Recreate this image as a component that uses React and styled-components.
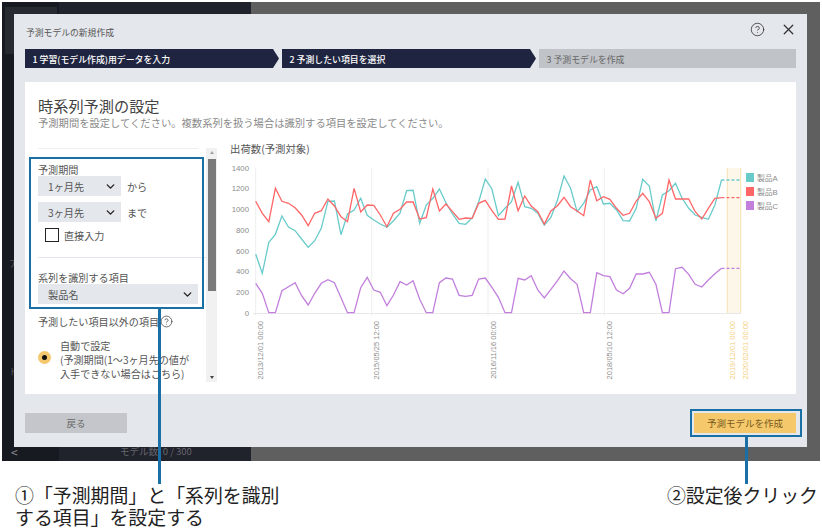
import styled, { createGlobalStyle } from "styled-components";
import { ChevronDown, CircleHelp, X } from "lucide-react";

// traces read off the screenshot, as y in 3x pixels of the chart crop (y = 140 + v / 3)
const TEAL = [
  343, 400, 307, 283, 228, 261, 272, 297, 322, 302, 265, 184, 183, 284, 222, 210, 175, 226, 240, 252, 262, 242, 220, 152,
  151, 250, 195, 175, 147, 188, 222, 250, 253, 234, 185, 117, 147, 227, 205, 185, 127, 200, 205, 220, 255, 232, 180, 108,
  145, 215, 190, 150, 140, 192, 190, 210, 242, 243, 205, 118, 138, 243, 165, 152, 130, 175, 205, 225, 232, 238, 195, 120,
];
const RED = [
  184, 220, 245, 145, 184, 190, 203, 225, 257, 220, 212, 177, 198, 230, 245, 145, 216, 195, 196, 225, 260, 220, 208, 186,
  186, 237, 233, 147, 213, 192, 215, 238, 234, 235, 190, 181, 212, 238, 237, 138, 212, 168, 198, 215, 252, 213, 197, 172,
  200, 213, 227, 120, 182, 170, 178, 205, 226, 220, 183, 160, 185, 235, 220, 120, 177, 177, 177, 215, 237, 205, 175, 173,
];
const PURPLE = [
  430, 460, 518, 518, 452, 440, 428, 467, 495, 460, 430, 419, 428, 473, 518, 518, 443, 412, 450, 457, 497, 465, 425, 435,
  422, 478, 518, 518, 428, 414, 417, 466, 469, 466, 417, 414, 442, 472, 518, 518, 415, 420, 407, 450, 474, 448, 422, 393,
  416, 433, 518, 518, 398, 407, 410, 450, 461, 445, 402, 402, 397, 433, 518, 518, 386, 382, 403, 433, 441, 420, 401, 385,
];

const SERIES = [
  { name: "製品A", color: "#68cbca", data: TEAL },
  { name: "製品B", color: "#ff6668", data: RED },
  { name: "製品C", color: "#c27fdc", data: PURPLE },
];

const X0 = 255.7;
const STEP = 6.56;
const BAND_LEFT = 727.3;
const BAND_RIGHT = 740.7;
const Y_TICKS = [1400, 1200, 1000, 800, 600, 400, 200, 0];
const DATES = [
  { x: 260, label: "2013/12/01 00:00", color: "#8c8c8c" },
  { x: 376.7, label: "2015/05/25 12:00", color: "#8c8c8c" },
  { x: 493, label: "2016/11/16 00:00", color: "#8c8c8c" },
  { x: 609.3, label: "2018/05/10 12:00", color: "#8c8c8c" },
  { x: 732.5, label: "2019/12/01 00:00", color: "#f6cf80" },
  { x: 745, label: "2020/02/01 00:00", color: "#f6cf80" },
];

const toPoints = (data) => data.map((v, i) => `${(X0 + STEP * i).toFixed(1)},${(140 + v / 3).toFixed(1)}`).join(" ");
const lastY = (data) => 140 + data[data.length - 1] / 3;
const lastX = X0 + STEP * 71;

function ForecastChart() {
  return (
    <ChartSvg viewBox="225 156 565 229" width="565" height="229">
      <rect x={BAND_LEFT} y="168" width={BAND_RIGHT - BAND_LEFT} height="145" fill="#fdf7ea" />
      <line x1={BAND_LEFT} y1="168" x2={BAND_LEFT} y2="313" stroke="#f8e2b4" />
      <line x1={BAND_RIGHT} y1="168" x2={BAND_RIGHT} y2="313" stroke="#f8e2b4" />
      {[255.7, 371.7, 488, 604.3].map((x) => (
        <line key={x} x1={x} y1="168" x2={x} y2="316" stroke="#eeeeee" />
      ))}
      <line x1="253" y1="313.5" x2="741" y2="313.5" stroke="#e8e8e8" />
      {Y_TICKS.map((tick) => (
        <AxisText key={tick} x="249" y={313 - tick * 0.1039 + 3} textAnchor="end" fill="#8c8c8c">
          {tick}
        </AxisText>
      ))}
      {DATES.map((d) => (
        <DateText key={d.label} transform={`translate(${d.x + 2.7} 321) rotate(-90)`} textAnchor="end" fill={d.color}>
          {d.label}
        </DateText>
      ))}
      {SERIES.map((s) => (
        <g key={s.name}>
          <polyline points={toPoints(s.data)} fill="none" stroke={s.color} strokeWidth="1.3" />
          <line
            x1={lastX}
            y1={lastY(s.data)}
            x2={BAND_RIGHT}
            y2={lastY(s.data)}
            stroke={s.color}
            strokeWidth="1.3"
            strokeDasharray="3 2"
          />
        </g>
      ))}
      {SERIES.map((s, i) => (
        <g key={s.name}>
          <rect x="746" y={173 + i * 14} width="8" height="9" fill={s.color} />
          <AxisText x="757" y={181 + i * 14} fill="#8c8c8c">
            {s.name}
          </AxisText>
        </g>
      ))}
    </ChartSvg>
  );
}

export default function App() {
  return (
    <Page>
      <GlobalStyle />
      <Screen>
        <SideRail>
          <RailTile />
          <RailText $top={255}>ア</RailText>
          <RailText $top={363}>ド</RailText>
          <RailBack>&lt;</RailBack>
        </SideRail>
        <ListColumn>
          <ModelCount>モデル数: 0 / 300</ModelCount>
        </ListColumn>
        <Modal>
          <ModalHeader>
            <ModalTitle>予測モデルの新規作成</ModalTitle>
            <HeaderIcons>
              <CircleHelp size={15} strokeWidth={1.3} />
              <X size={17} strokeWidth={1.8} />
            </HeaderIcons>
          </ModalHeader>
          <Stepper>
            <Step $width={254} $arrow>
              1 学習(モデル作成)用データを入力
            </Step>
            <Step $width={254} $arrow>
              2 予測したい項目を選択
            </Step>
            <Step $width={257} $off>
              3 予測モデルを作成
            </Step>
          </Stepper>
          <Content>
            <Heading>時系列予測の設定</Heading>
            <SubHeading>予測期間を設定してください。複数系列を扱う場合は識別する項目を設定してください。</SubHeading>
            <Body>
              <SettingsPane>
                <TopRule />
                <FieldLabel $first>予測期間</FieldLabel>
                <SelectRow>
                  <FakeSelect $width={83}>
                    1ヶ月先
                    <ChevronDown size={13} strokeWidth={2.6} />
                  </FakeSelect>
                  から
                </SelectRow>
                <SelectRow $second>
                  <FakeSelect $width={83}>
                    3ヶ月先
                    <ChevronDown size={13} strokeWidth={2.6} />
                  </FakeSelect>
                  まで
                </SelectRow>
                <CheckRow>
                  <CheckBox />
                  直接入力
                </CheckRow>
                <Divider />
                <FieldLabel>系列を識別する項目</FieldLabel>
                <FakeSelect $width={160}>
                  製品名
                  <ChevronDown size={13} strokeWidth={2.6} />
                </FakeSelect>
                <HelpLabel>
                  予測したい項目以外の項目
                  <CircleHelp size={13} strokeWidth={1.3} />
                </HelpLabel>
                <RadioRow>
                  <Radio />
                  <RadioText>
                    自動で設定
                    <br />
                    (予測期間(1〜3ヶ月先の値が
                    <br />
                    入手できない場合はこちら)
                  </RadioText>
                </RadioRow>
              </SettingsPane>
              <ScrollTrack>
                <ScrollArrow $up />
                <ScrollThumb />
                <ScrollArrow />
              </ScrollTrack>
              <ChartColumn>
                <ChartTitle>出荷数(予測対象)</ChartTitle>
                <ForecastChart />
              </ChartColumn>
            </Body>
          </Content>
          <ModalFooter>
            <BackButton>戻る</BackButton>
            <CreateButton>予測モデルを作成</CreateButton>
          </ModalFooter>
        </Modal>
      </Screen>
      <Captions>
        <Caption>
          ①「予測期間」と「系列を識別
          <br />
          する項目」を設定する
        </Caption>
        <Caption>②設定後クリック</Caption>
      </Captions>
      <HighlightBox $left={29} $top={157} $width={175} $height={152} />
      <HighlightBox $left={690} $top={409} $width={112} $height={28} />
      <Leader $left={158} $top={309} $height={175} />
      <Leader $left={745} $top={437} $height={47} />
    </Page>
  );
}

const GlobalStyle = createGlobalStyle`
  html, body {
    margin: 0;
    padding: 0;
    background: #ffffff;
  }
  * {
    box-sizing: border-box;
  }
`;

const Page = styled.div`
  position: relative;
  width: 822px;
  height: 528px;
  overflow: hidden;
  font-family: "Noto Sans CJK JP", "Noto Sans", sans-serif;
  color: #555;
`;

const Screen = styled.div`
  position: relative;
  display: flex;
  width: 818px;
  height: 459px;
  margin: 2px 2px 0;
  background: #5f5f60;
`;

const SideRail = styled.div`
  position: relative;
  width: 57px;
  background: #181a21;
`;

const RailTile = styled.div`
  width: 52px;
  height: 47px;
  margin: 5px 0 0 3px;
  background: #282a31;
`;

const RailText = styled.span`
  position: absolute;
  left: 7px;
  top: ${(props) => props.$top}px;
  font-size: 9px;
  color: #55565c;
`;

const RailBack = styled.span`
  position: absolute;
  left: 9px;
  top: 441px;
  font-size: 12px;
  color: #8a8b90;
`;

const ListColumn = styled.div`
  display: flex;
  align-items: flex-end;
  width: 192px;
  padding: 0 0 3px 61px;
  background: #20222c;
`;

const ModelCount = styled.div`
  font-size: 9.5px;
  line-height: 14px;
  color: #66676d;
`;

const Modal = styled.div`
  position: absolute;
  left: 12px;
  top: 12px;
  display: flex;
  flex-direction: column;
  width: 793px;
  height: 433px;
  padding: 0 11px;
  background: #e4e7ec;
`;

const ModalHeader = styled.div`
  display: flex;
  justify-content: space-between;
  align-items: center;
  height: 35px;
  padding-bottom: 4px;
`;

const ModalTitle = styled.div`
  margin: 5px 0 0 1px;
  font-size: 8.8px;
  color: #555;
`;

const HeaderIcons = styled.div`
  display: flex;
  align-items: center;
  gap: 15px;
  margin-right: -1px;
  color: #333;
`;

const Stepper = styled.div`
  display: flex;
  gap: 3px;
  height: 19px;
`;

const Step = styled.div`
  display: flex;
  flex-shrink: 0;
  align-items: center;
  width: ${(props) => props.$width}px;
  padding: 1px 0 0 7.5px;
  font-size: 8.9px;
  font-weight: ${(props) => (props.$off ? 400 : 500)};
  color: ${(props) => (props.$off ? "#666" : "#fff")};
  background: ${(props) => (props.$off ? "#c0c3c8" : "#1f2540")};
  clip-path: ${(props) =>
    props.$arrow ? "polygon(0 0, calc(100% - 6px) 0, 100% 50%, calc(100% - 6px) 100%, 0 100%)" : "none"};
`;

const Content = styled.div`
  height: 312px;
  margin-top: 14px;
  padding: 14px 0 0 13px;
  background: #fff;
`;

const Heading = styled.h1`
  margin: 0 0 1px;
  font-size: 15.2px;
  font-weight: 400;
  line-height: 18px;
  color: #444;
`;

const SubHeading = styled.p`
  margin: 0;
  font-size: 10.3px;
  line-height: 16px;
  color: #8a8a8a;
`;

const Body = styled.div`
  display: flex;
  height: 243px;
  margin-top: 11px;
`;

const SettingsPane = styled.div`
  width: 168px;
  height: 234px;
  margin-top: 6px;
  overflow: hidden;
  font-size: 10.1px;
`;

const TopRule = styled.div`
  width: 160px;
  height: 1px;
  background: #eeeeee;
`;

const FieldLabel = styled.div`
  margin-top: ${(props) => (props.$first ? 14 : 13)}px;
  line-height: 13px;
`;

const SelectRow = styled.div`
  display: flex;
  align-items: center;
  gap: 6px;
  margin-top: ${(props) => (props.$second ? 6 : 0)}px;
`;

const FakeSelect = styled.div`
  display: flex;
  justify-content: space-between;
  align-items: center;
  width: ${(props) => props.$width}px;
  height: 20px;
  padding: 0 4px 0 10px;
  font-size: 10.2px;
  background: #e4e7ec;
  svg {
    color: #222;
  }
`;

const CheckRow = styled.div`
  display: flex;
  align-items: center;
  gap: 5px;
  height: 14px;
  margin-top: 6px;
  padding-left: 7px;
`;

const CheckBox = styled.div`
  width: 14px;
  height: 14px;
  border: 1.5px solid #222;
  background: #fff;
`;

const Divider = styled.div`
  height: 1px;
  margin-top: 15px;
  background: #e4e7ec;
`;

const HelpLabel = styled.div`
  display: flex;
  align-items: center;
  gap: 1px;
  height: 14px;
  margin-top: 10px;
  svg {
    color: #333;
  }
`;

const RadioRow = styled.div`
  display: flex;
  gap: 9px;
  margin-top: 11px;
`;

const Radio = styled.div`
  display: flex;
  flex-shrink: 0;
  justify-content: center;
  align-items: center;
  width: 13px;
  height: 13px;
  margin-top: 12px;
  border-radius: 50%;
  background: #f5c76c;
  &::after {
    content: "";
    width: 5px;
    height: 5px;
    border-radius: 50%;
    background: #111;
  }
`;

const RadioText = styled.div`
  line-height: 14px;
  white-space: nowrap;
`;

const ScrollTrack = styled.div`
  display: flex;
  flex-direction: column;
  align-items: center;
  width: 11px;
  height: 234px;
  margin-top: 6px;
  background: #f1f1f1;
`;

const ScrollArrow = styled.div`
  width: 0;
  height: 0;
  margin: ${(props) => (props.$up ? "3px 0 5px" : "auto 0 3px")};
  border-left: 2.5px solid transparent;
  border-right: 2.5px solid transparent;
  border-top: ${(props) => (props.$up ? "none" : "3px solid #444")};
  border-bottom: ${(props) => (props.$up ? "3px solid #a5a5a5" : "none")};
`;

const ScrollThumb = styled.div`
  width: 8px;
  height: 132px;
  background: #7a7a7a;
`;

const ChartColumn = styled.div`
  display: flex;
  flex-direction: column;
  margin-left: 8px;
`;

const ChartTitle = styled.div`
  height: 14px;
  padding-left: 5px;
  font-size: 10.4px;
  line-height: 14px;
  color: #555;
`;

const ChartSvg = styled.svg`
  display: block;
  flex-shrink: 0;
`;

const AxisText = styled.text`
  font-family: "Liberation Sans", "Noto Sans CJK JP", sans-serif;
  font-size: 7.8px;
`;

const DateText = styled(AxisText)`
  font-size: 7.5px;
`;

const ModalFooter = styled.div`
  display: flex;
  justify-content: space-between;
  margin-top: 19px;
`;

const BackButton = styled.div`
  display: flex;
  justify-content: center;
  align-items: center;
  width: 102px;
  height: 20px;
  font-size: 9.5px;
  color: #666;
  background: #c4c6cb;
`;

const CreateButton = styled(BackButton)`
  color: #7a5a1e;
  background: #f5c96b;
`;

const Captions = styled.div`
  display: flex;
  justify-content: space-between;
  padding: 23px 4px 0 15px;
`;

const Caption = styled.div`
  font-size: 18.9px;
  line-height: 22px;
  color: #222;
`;

const HighlightBox = styled.div`
  position: absolute;
  left: ${(props) => props.$left}px;
  top: ${(props) => props.$top}px;
  width: ${(props) => props.$width}px;
  height: ${(props) => props.$height}px;
  border: 2px solid #1a6fa5;
`;

const Leader = styled.div`
  position: absolute;
  left: ${(props) => props.$left}px;
  top: ${(props) => props.$top}px;
  width: 3px;
  height: ${(props) => props.$height}px;
  background: #1a6fa5;
`;
